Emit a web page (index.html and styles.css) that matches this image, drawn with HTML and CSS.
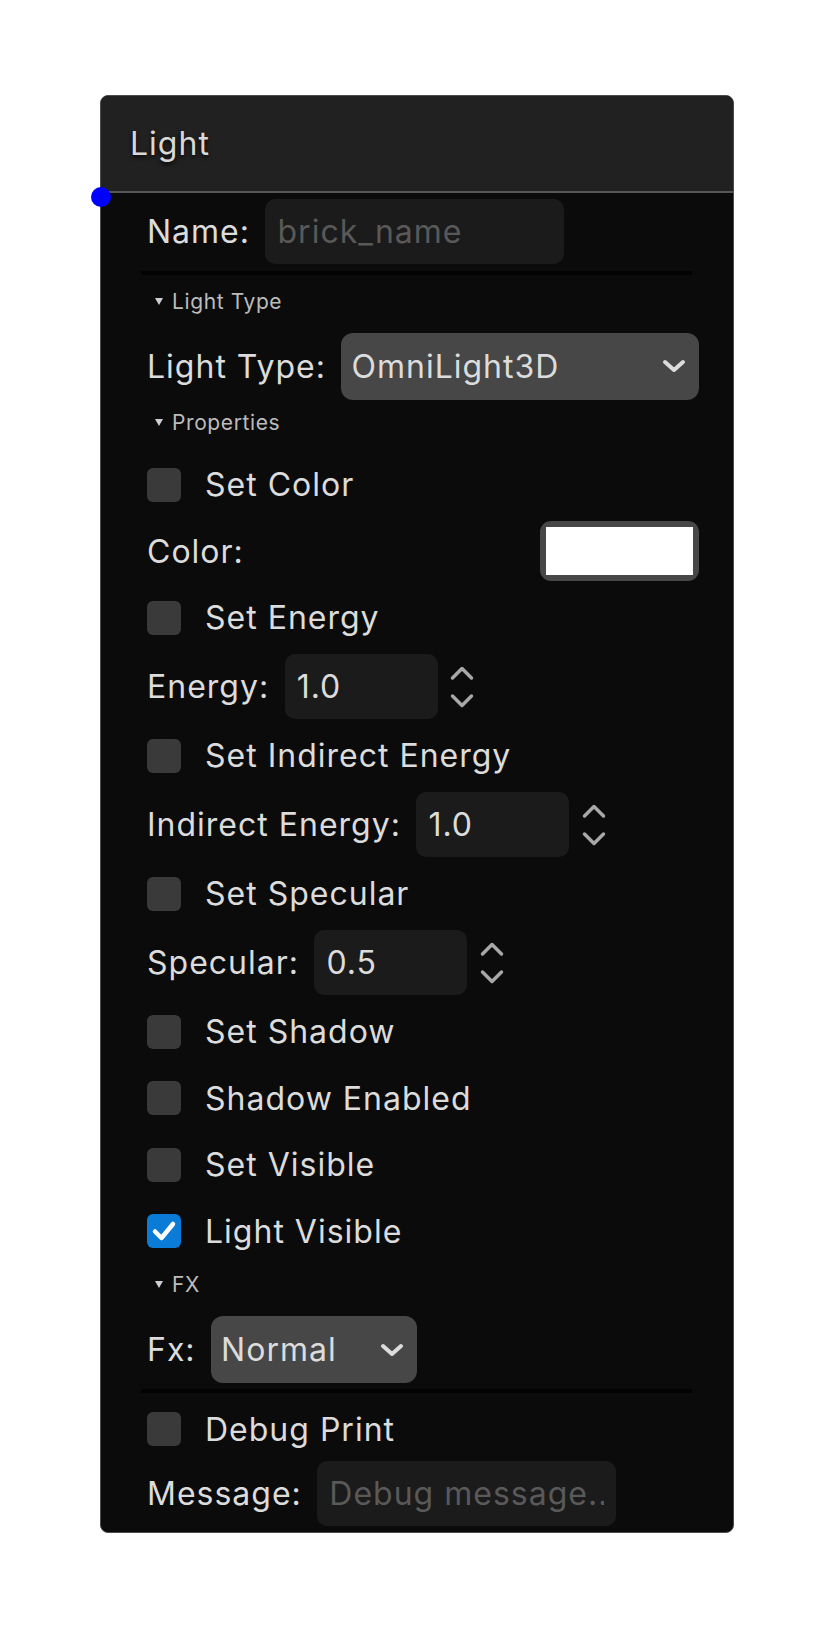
FILE: index.html
```html
<!DOCTYPE html>
<html lang="en">
<head>
  <meta charset="UTF-8">
  <title>Light Brick</title>
  <link rel="stylesheet" href="styles.css">
</head>
<body>

  <div class="brick">
    <div class="brick-head">Light</div>
    <span class="port"></span>

    <div class="brick-body">
      <div class="row">
        <label>Name:</label>
        <input class="field wide" type="text" placeholder="brick_name">
      </div>

      <div class="sep"></div>

      <div class="section"><span class="caret"></span>Light Type</div>

      <div class="row">
        <label>Light Type:</label>
        <div class="select grow">
          <span>OmniLight3D</span>
          <svg class="chev" viewBox="0 0 24 14"><path d="M3 3 L12 11 L21 3"/></svg>
        </div>
      </div>

      <div class="section"><span class="caret"></span>Properties</div>

      <div class="check"><span class="box"></span>Set Color</div>
      <div class="row spread">
        <label>Color:</label>
        <div class="swatch"><span></span></div>
      </div>

      <div class="check"><span class="box"></span>Set Energy</div>
      <div class="row">
        <label>Energy:</label>
        <input class="field num" type="text" value="1.0">
        <svg class="spin" viewBox="0 0 24 46"><path d="M2.5 14 L12 4.5 L21.5 14 M2.5 32 L12 41.5 L21.5 32"/></svg>
      </div>

      <div class="check"><span class="box"></span>Set Indirect Energy</div>
      <div class="row">
        <label>Indirect Energy:</label>
        <input class="field num" type="text" value="1.0">
        <svg class="spin" viewBox="0 0 24 46"><path d="M2.5 14 L12 4.5 L21.5 14 M2.5 32 L12 41.5 L21.5 32"/></svg>
      </div>

      <div class="check"><span class="box"></span>Set Specular</div>
      <div class="row">
        <label>Specular:</label>
        <input class="field num" type="text" value="0.5">
        <svg class="spin" viewBox="0 0 24 46"><path d="M2.5 14 L12 4.5 L21.5 14 M2.5 32 L12 41.5 L21.5 32"/></svg>
      </div>

      <div class="check"><span class="box"></span>Set Shadow</div>
      <div class="check"><span class="box"></span>Shadow Enabled</div>
      <div class="check"><span class="box"></span>Set Visible</div>
      <div class="check">
        <span class="box on">
          <svg viewBox="0 0 34 34"><path d="M8 17.5 L14.5 24 L26 10"/></svg>
        </span>
        Light Visible
      </div>

      <div class="section"><span class="caret"></span>FX</div>

      <div class="row">
        <label>Fx:</label>
        <div class="select short">
          <span>Normal</span>
          <svg class="chev" viewBox="0 0 24 14"><path d="M3 3 L12 11 L21 3"/></svg>
        </div>
      </div>

      <div class="sep low"></div>

      <div class="check"><span class="box"></span>Debug Print</div>
      <div class="row last">
        <label>Message:</label>
        <input class="field wide" type="text" placeholder="Debug message...">
      </div>
    </div>
  </div>

</body>
</html>
```

FILE: styles.css
```css
body {
  margin: 0;
  background: #fff;
  font-family: Inter, "Noto Sans", sans-serif;
  color: #dcdcdc;
  letter-spacing: 1px;
}

.brick {
  position: relative;
  width: 634px;
  margin: 95px 0 0 100px;
  border: 1px solid #4c4c4c;
  border-radius: 8px;
  background: #0b0b0b;
  box-sizing: border-box;
}

.brick-head {
  height: 95px;
  padding-left: 29px;
  display: flex;
  align-items: center;
  background: #212121;
  border-bottom: 2px solid #585858;
  border-radius: 7px 7px 0 0;
  font-size: 32px;
  color: #d8d8d8;
  text-shadow: 0 2px 4px rgba(0, 0, 0, 0.9);
}

/* connection point on the left edge */
.port {
  position: absolute;
  left: -10px;
  top: 91px;
  width: 20px;
  height: 20px;
  border-radius: 50%;
  background: #0000ff;
}

.brick-body {
  display: flex;
  flex-direction: column;
  gap: 6.5px;
  padding: 6px 34px 6px 40px;
}

.row {
  display: flex;
  align-items: center;
  gap: 15.5px;
  height: 65px;
  padding-left: 6px;
  font-size: 32px;
}

.row.spread {
  justify-content: space-between;
  height: 60px;
}

.row.last {
  margin-top: -5px;
}

.field {
  height: 65px;
  box-sizing: border-box;
  padding: 0 12px;
  border: none;
  border-radius: 10px;
  background: #1b1b1b;
  color: #dcdcdc;
  font-family: inherit;
  font-size: 32px;
  letter-spacing: 1px;
  outline: none;
}

.field::placeholder {
  color: #595959;
}

.field.wide {
  width: 299px;
}

.field.num {
  width: 153px;
}

.spin {
  width: 24px;
  height: 46px;
  margin-left: -3px;
  fill: none;
  stroke: #a8a8a8;
  stroke-width: 3.5;
  stroke-linecap: round;
  stroke-linejoin: round;
}

.select {
  height: 67px;
  box-sizing: border-box;
  display: flex;
  align-items: center;
  justify-content: space-between;
  padding: 0 13px 0 10px;
  border-radius: 12px;
  background: #474747;
}

.select.grow {
  flex: 1;
}

.select.short {
  width: 206px;
}

.chev {
  width: 24px;
  height: 14px;
  fill: none;
  stroke: #dcdcdc;
  stroke-width: 4;
  stroke-linecap: round;
  stroke-linejoin: round;
}

.swatch {
  width: 159px;
  height: 60px;
  box-sizing: border-box;
  padding: 6px;
  border-radius: 11px;
  background: #474747;
}

.swatch span {
  display: block;
  height: 100%;
  background: #fff;
}

.check {
  display: flex;
  align-items: center;
  gap: 24px;
  height: 60px;
  padding-left: 6px;
  font-size: 32px;
}

.box {
  width: 34px;
  height: 34px;
  border-radius: 6px;
  background: #3a3a3a;
  flex-shrink: 0;
}

.box.on {
  background: #0b7bd8;
}

.box svg {
  display: block;
  width: 34px;
  height: 34px;
  fill: none;
  stroke: #fff;
  stroke-width: 4.5;
  stroke-linecap: round;
  stroke-linejoin: round;
}

.section {
  display: flex;
  align-items: center;
  height: 28px;
  margin: 3px 0 12px;
  padding-left: 14px;
  font-size: 21px;
  letter-spacing: 0.6px;
  color: #bcbcbc;
}

.caret {
  width: 0;
  height: 0;
  margin-right: 9px;
  border-left: 4px solid transparent;
  border-right: 4px solid transparent;
  border-top: 7px solid #cfcfcf;
}

.sep {
  height: 4px;
  margin: 0 7px 3px 0;
  background: #030303;
}

.sep.low {
  margin: 0 7px 0 0;
}
```
